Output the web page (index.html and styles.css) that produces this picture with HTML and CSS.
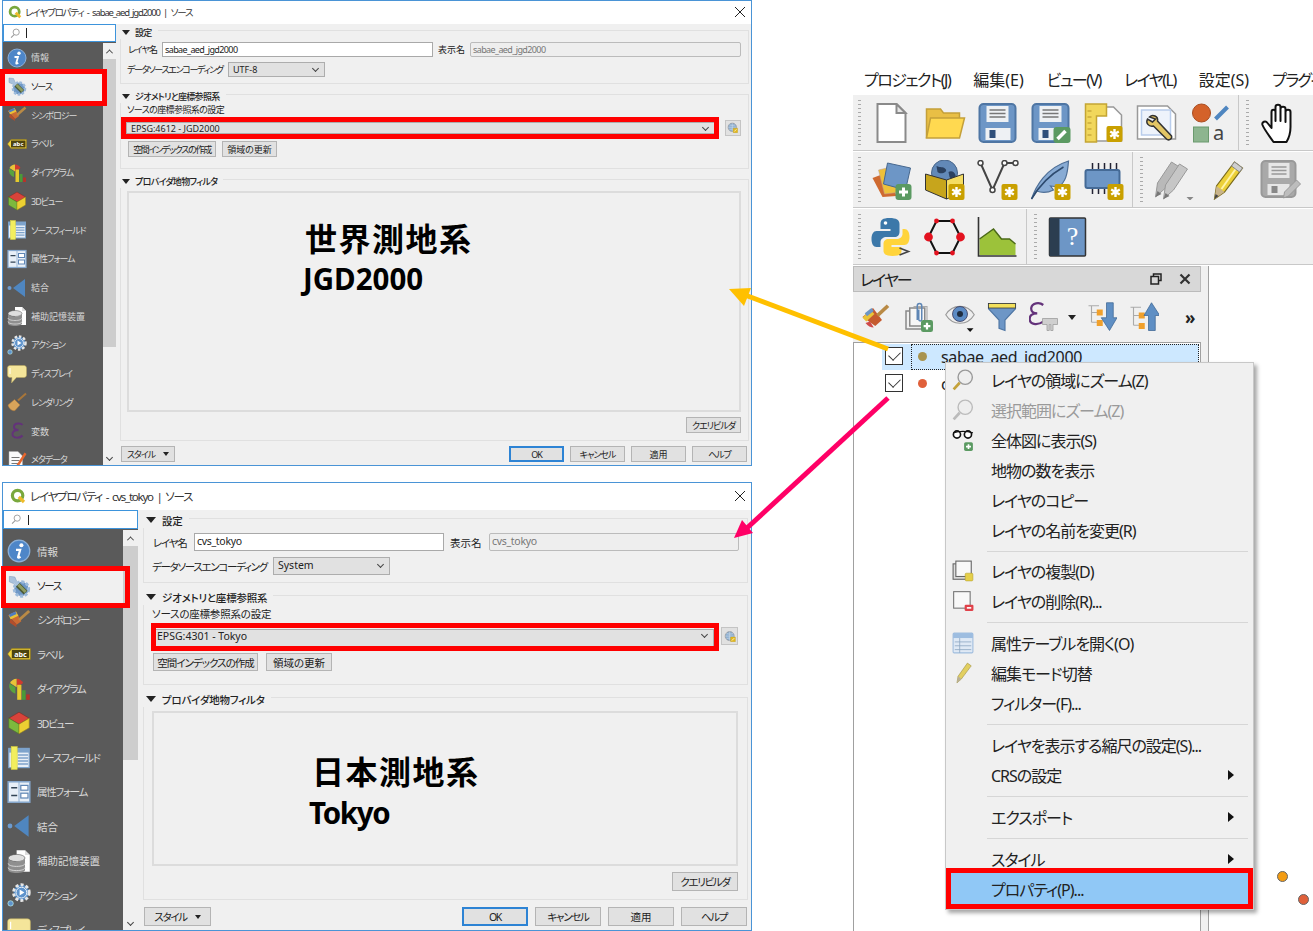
FILE: index.html
```html
<!DOCTYPE html>
<html lang="ja">
<head>
  <meta charset="UTF-8" />
  <title>レイヤプロパティ</title>
  <link rel="stylesheet" href="styles.css">
</head>
<body>
<div class="page">

  <!-- icon sprite -->
  <svg class="sprite" xmlns="http://www.w3.org/2000/svg">
    <defs>
      <g id="b-star"><rect width="16" height="16" rx="2" fill="#c9a000"/><path d="M8 3v10M3.700 5.500l8.600 5M3.700 10.500l8.600-5" stroke="#fff" stroke-width="2.400"/></g>
      <g id="b-plus"><rect width="16" height="16" rx="3" fill="#5b9a62"/><path d="M8 3.500v9M3.500 8h9" stroke="#fff" stroke-width="3"/></g>
      <g id="floppy"><rect x="2" y="1" width="36" height="38" rx="4" fill="#6d96c6" stroke="#4f76a4" stroke-width="2"/><rect x="9" y="3" width="22" height="16" fill="#eef1f4"/><path d="M12 7h16M12 10.500h16M12 14h16" stroke="#777" stroke-width="1.500"/><rect x="8" y="25" width="25" height="12" fill="#eef1f4"/><rect x="12" y="27" width="6" height="8" fill="#2f4f7a"/></g>
    </defs>
    <symbol id="i-info" viewBox="0 0 40 40"><circle cx="20" cy="20" r="18" fill="#4e86c8" stroke="#8cb0d8" stroke-width="2"/><circle cx="24" cy="10.500" r="3.400" fill="#fff"/><path d="M15 18h7l-3.500 12c-.4 1.500 1 1.800 4-.5" stroke="#fff" fill="none" stroke-width="3.600"/></symbol>
    <symbol id="i-source" viewBox="0 0 40 40"><circle cx="24" cy="25" r="12" fill="#6e97c6" stroke="#9dbbdb" stroke-width="5" stroke-dasharray="5 3"/><path d="M4 4l9 1 3 7-5 4-7-3z" fill="#a9c2dc" stroke="#7d9cbc"/><path d="M11 11l12 12" stroke="#a9c2dc" stroke-width="5"/><path d="M18 18l13 13" stroke="#4b5a38" stroke-width="9"/><path d="M19 18l12 12" stroke="#8f9d62" stroke-width="5"/></symbol>
    <symbol id="i-symbol" viewBox="0 0 40 40"><path d="M2 12l13-6 9 16-8 6z" fill="#cc6b33"/><path d="M3 12l12-6 4 7-13 6z" fill="#e9c338"/><path d="M3 11l11-5 2 4-11 5z" fill="#4f7cc0"/><path d="M15 26L6 18l-2 6 12 8z" fill="#b24e2c"/><path d="M20 20L37 5" stroke="#b98a45" stroke-width="5"/></symbol>
    <symbol id="i-diagram" viewBox="0 0 40 40"><path d="M16 3a13 13 0 0 1 11 7l-11 7z" fill="#cf3a30"/><path d="M16 3A13 13 0 0 0 5 10l11 7z" fill="#e9c338"/><path d="M4 11a14 14 0 0 0 10 17V17z" fill="#59a33e"/><rect x="17" y="13" width="7" height="25" fill="#e6c92e"/><rect x="25" y="22" width="6" height="16" fill="#4b9a38"/><rect x="32" y="29" width="6" height="9" fill="#b5332a"/></symbol>
    <symbol id="i-3d" viewBox="0 0 40 40"><path d="M20 2l17 10-17 10L3 12z" fill="#d9433a" stroke="#7a2a25"/><path d="M3 12l17 10v16L3 28z" fill="#7db93d" stroke="#4d7a24"/><path d="M37 12L20 22v16l17-10z" fill="#ecd032" stroke="#9c8a1c"/></symbol>
    <symbol id="i-fields" viewBox="0 0 40 40"><rect x="3" y="4" width="34" height="32" fill="#e8eff7" stroke="#7da3cc" stroke-width="2"/><rect x="3" y="4" width="34" height="7" fill="#7da3cc"/><path d="M18 15h17M18 20h17M18 25h17M18 30h17" stroke="#7da3cc" stroke-width="2.500"/><rect x="7" y="1" width="10" height="38" fill="#f2ee5e" stroke="#d7cf3c"/></symbol>
    <symbol id="i-form" viewBox="0 0 40 40"><rect x="2" y="3" width="36" height="34" fill="#e8eff7" stroke="#87a9cf" stroke-width="2.500"/><path d="M20 3v34" stroke="#87a9cf" stroke-width="1.500"/><rect x="23" y="9" width="12" height="8" fill="#fff" stroke="#5f86b5" stroke-width="2"/><rect x="23" y="22" width="12" height="8" fill="#fff" stroke="#5f86b5" stroke-width="2"/><path d="M7 13h10M7 26h10" stroke="#345" stroke-width="2.500"/></symbol>
    <symbol id="i-join" viewBox="0 0 40 40"><path d="M36 2v36L12 20z" fill="#4f86c0"/><circle cx="5" cy="20" r="4" fill="#6c9bd0"/></symbol>
    <symbol id="i-aux" viewBox="0 0 40 40"><path d="M16 2h14l8 8v28H16z" fill="#fff"/><path d="M30 2v8h8" fill="#ddd"/><ellipse cx="16" cy="15" rx="14" ry="6" fill="#dfdfdf" stroke="#555"/><path d="M2 15v20c0 3 6 5 14 5s14-2 14-5V15c0 3-6 6-14 6S2 18 2 15z" fill="#8f8f8f"/><path d="M2 24c0 3 6 5 14 5s14-2 14-5M2 31c0 3 6 5 14 5s14-2 14-5" stroke="#ddd" stroke-width="1.500" fill="none"/></symbol>
    <symbol id="i-action" viewBox="0 0 40 40"><circle cx="24" cy="16" r="13" fill="#4f86c0" stroke="#e6e6e6" stroke-width="5" stroke-dasharray="5 3.500"/><circle cx="24" cy="16" r="9" fill="#5e93cc" stroke="#fff" stroke-width="1.500"/><path d="M21 11l8 5-8 5z" fill="#fff"/><circle cx="6" cy="34" r="4.500" fill="#5e93cc" stroke="#cfe" stroke-width="1"/></symbol>
    <symbol id="i-display" viewBox="0 0 40 40"><path d="M6 3h28c3 0 5 2 5 5v14c0 3-2 5-5 5H19l-10 11 1-11H6c-3 0-5-2-5-5V8c0-3 2-5 5-5z" fill="#f4e59a" stroke="#b9a75c"/><path d="M6 8v12" stroke="#fff" stroke-width="2"/></symbol>
    <symbol id="i-render" viewBox="0 0 40 40"><path d="M2 26l13-11 11 11-10 11c-5 2-12-3-14-11z" fill="#d9a45a" stroke="#a8763a"/><path d="M22 17L38 3" stroke="#a8763a" stroke-width="4"/></symbol>
    <symbol id="i-var" viewBox="0 0 40 40"><path d="M31 8c-3-4-16-5-17 3-.5 5 4 7 9 7-7 0-13 3-12 9 1 8 15 8 20 2" fill="none" stroke="#63327a" stroke-width="4"/></symbol>
    <symbol id="i-meta" viewBox="0 0 40 40"><path d="M4 3h18l9 9v27H4z" fill="#fafafa" stroke="#aaa"/><path d="M9 15h16M9 21h16M9 27h14" stroke="#777" stroke-width="2"/><path d="M19 30L35 5l4 3-16 25-6 3z" fill="#e8662d"/></symbol>

    <symbol id="t-new" viewBox="0 0 40 40"><path d="M6 1h19l9 9v29H6z" fill="#fff" stroke="#8a8a8a" stroke-width="2"/><path d="M25 1v9h9z" fill="#e6e6e6" stroke="#8a8a8a" stroke-width="2"/></symbol>
    <symbol id="t-open" viewBox="0 0 40 40"><path d="M2 35V6h14l3 4h16v7" fill="#e9bf45" stroke="#c4a03a" stroke-width="1.500"/><path d="M2 35l4-20h34l-5 20z" fill="#ffd950" stroke="#c4a03a" stroke-width="1.500"/></symbol>
    <symbol id="t-save" viewBox="0 0 40 40"><use href="#floppy"/></symbol>
    <symbol id="t-saveas" viewBox="0 0 40 40"><use href="#floppy"/><rect x="23" y="24" width="17" height="16" rx="3" fill="#5b9a62"/><path d="M27 36l8-8" stroke="#fff" stroke-width="3.500"/></symbol>
    <symbol id="t-layout" viewBox="0 0 40 40"><path d="M12 4h18l8 8v26H12z" fill="#fff" stroke="#999" stroke-width="1.500"/><path d="M2 1h21v12H13v26H2z" fill="#f1d75c" stroke="#c4a533" stroke-width="1.500"/><path d="M4 8h4M4 14h4M4 20h4M4 26h4M4 32h4" stroke="#b8952a"/><use href="#b-star" x="23" y="23"/></symbol>
    <symbol id="t-style" viewBox="0 0 40 40"><path d="M1 3h30l8 8v25H1z" fill="#fff" stroke="#999" stroke-width="1.500"/><rect x="5" y="7" width="29" height="25" fill="#eef3fb" stroke="#b9cdec" stroke-width="1.500"/><path d="M13 14c3-3 9-1 8 4l14 15c1 3-3 5-5 3L17 23c-5 1-8-3-6-7l5 3 3-3z" fill="#e3c665" stroke="#333" stroke-width="1.500"/></symbol>
    <symbol id="t-hand" viewBox="0 0 40 40"><path d="M14 39C10 33 5 27 3 22c-1-3 3-5 5-2l4 5V9c0-3 4-3 4 0v9V4c0-3 5-3 5 0v14V6c0-3 5-3 5 0v13V9c0-3 5-3 5 0v15c0 6-1 10-4 15z" fill="#fff" stroke="#111" stroke-width="2" stroke-linejoin="round"/></symbol>

    <symbol id="t-dsm" viewBox="0 0 40 40"><path d="M1 18l16-6 8 24-14 1z" fill="#cf6a30"/><path d="M7 10l17-4 6 26-17 2z" fill="#eec13a" stroke="#b99" stroke-width=".5"/><path d="M16 3l23 5-5 22-22-6z" fill="#6d96c6" stroke="#47688f"/><use href="#b-plus" x="24" y="24"/></symbol>
    <symbol id="t-gpkg" viewBox="0 0 40 40"><circle cx="20" cy="13" r="13" fill="#6289b8" stroke="#49668a"/><path d="M12 6c4 2 6 0 9 3s-5 6-8 3zM24 12c3-2 6 0 7 3s-4 5-6 2z" fill="#2b4160"/><path d="M1 14l21 6v19L1 30z" fill="#c7a51c" stroke="#333"/><path d="M22 20l17-6v18l-17 7z" fill="#f5dd63" stroke="#333"/><use href="#b-star" x="24" y="24"/></symbol>
    <symbol id="t-vec" viewBox="0 0 40 40"><path d="M3 3l12 27L27 3h11" fill="none" stroke="#444" stroke-width="2"/><circle cx="3" cy="3" r="2.500" fill="#fff" stroke="#444" stroke-width="1.500"/><circle cx="15" cy="30" r="2.500" fill="#fff" stroke="#444" stroke-width="1.500"/><circle cx="27" cy="3" r="2.500" fill="#fff" stroke="#444" stroke-width="1.500"/><circle cx="38" cy="3" r="2.500" fill="#fff" stroke="#444" stroke-width="1.500"/><use href="#b-star" x="24" y="24"/></symbol>
    <symbol id="t-feather" viewBox="0 0 40 40"><path d="M1 39C5 27 15 8 38 1c-1 14-3 21-10 26l-8-1 3 4c-6 3-12 3-17 1z" fill="#88abd4" stroke="#4f6f96" stroke-width="1.200"/><path d="M1 39C8 27 19 15 33 7" stroke="#2d4a6e" fill="none" stroke-width="1.500"/><use href="#b-star" x="24" y="24"/></symbol>
    <symbol id="t-chip" viewBox="0 0 40 40"><path d="M9 3v8M15 3v8M21 3v8M27 3v8M33 3v8M9 27v7M15 27v7M21 27v7" stroke="#223" stroke-width="1.500"/><rect x="2" y="10" width="34" height="18" rx="2" fill="#6d96c6" stroke="#456a96" stroke-width="2"/><use href="#b-star" x="24" y="24"/></symbol>
    <symbol id="t-pens" viewBox="0 0 40 40"><path d="M2 37l2-14L18 2l8 5-14 21z" fill="#b9b9b9" stroke="#999"/><path d="M10 39l2-14L26 4l8 5-14 21z" fill="#c6c6c6" stroke="#999"/><path d="M2 37l2-6 4 3z" fill="#777"/><path d="M10 39l2-6 4 3z" fill="#777"/><path d="M33 37h7l-3.500 3.500z" fill="#888"/></symbol>
    <symbol id="t-pen" viewBox="0 0 40 40"><path d="M8 39l2-13L28 2l8 6-18 24z" fill="#ecd038" stroke="#7a6a1c" stroke-width="1.200"/><path d="M15 29L32 5" stroke="#fff3a8" stroke-width="2"/><path d="M28 2l8 6-3 4-8-6z" fill="#cfcfcf" stroke="#888"/><path d="M8 39l2-13 8 6z" fill="#c9b48a"/><path d="M8 39l1-5 3 2z" fill="#444"/></symbol>
    <symbol id="t-savegray" viewBox="0 0 40 40"><rect x="2" y="1" width="34" height="36" rx="4" fill="#a9a9a9" stroke="#999" stroke-width="2"/><rect x="9" y="3" width="21" height="15" fill="#e6e6e6"/><path d="M12 7h15M12 10.500h15M12 14h15" stroke="#999" stroke-width="1.500"/><rect x="8" y="24" width="22" height="11" fill="#e6e6e6"/><rect x="12" y="26" width="6" height="7" fill="#888"/><path d="M24 38l1-6 12-12 4 4-12 12z" fill="#bdbdbd" stroke="#999"/></symbol>

    <symbol id="t-python" viewBox="0 0 40 40"><path d="M18 1c-7 0-9 2-9 6v5h10v2H5c-3 0-5 3-5 8s2 8 5 8h4v-5c0-3 3-5 6-5h8c3 0 5-2 5-5V7c0-4-3-6-10-6z" fill="#3c78a9"/><circle cx="14" cy="6" r="1.800" fill="#fff"/><path d="M31 12v5c0 3-3 5-6 5h-8c-3 0-5 2-5 5v7c0 3 3 5 9 5 7 0 9-2 9-5v-4H20v-2h13c3 0 5-3 5-8s-2-8-5-8z" fill="#ffd43b"/><path d="M28 31l9 3.500-9 3.500" fill="none" stroke="#444" stroke-width="1.600"/></symbol>
    <symbol id="t-hexagon" viewBox="0 0 40 40"><path d="M12 4h16l8 16-8 16H12L4 20z" fill="none" stroke="#111" stroke-width="2"/><g fill="#e3121f"><circle cx="12" cy="4" r="2.400"/><circle cx="28" cy="4" r="2.400"/><circle cx="12" cy="36" r="2.400"/><circle cx="28" cy="36" r="2.400"/><circle cx="4" cy="20" r="4.400"/><circle cx="36" cy="20" r="4.400"/></g></symbol>
    <symbol id="t-profile" viewBox="0 0 40 40"><path d="M2 38V22l14-10 8 10 8 0 6 5v11z" fill="#9cc23a"/><path d="M2 22l14-10 8 10 8 0 6 5" fill="none" stroke="#4b6a18" stroke-width="1.500"/><path d="M1 0v39h38" fill="none" stroke="#333" stroke-width="1.600"/></symbol>

    <symbol id="l-brush" viewBox="0 0 40 40"><path d="M2 20l14-12 12 16-9 8z" fill="#c55a2e"/><path d="M2 21l10-11 6 6-11 10z" fill="#e9c338"/><path d="M5 15l9-7 3 4-9 7z" fill="#6d96c6"/><path d="M6 28l6-2 5 8c-4 0-8-2-11-6z" fill="#cf4a4a"/><path d="M22 18L36 5" stroke="#b98a45" stroke-width="5"/></symbol>
    <symbol id="l-clip" viewBox="0 0 40 40"><path d="M14 12H4v24h20" fill="none" stroke="#888" stroke-width="2"/><rect x="9" y="8" width="20" height="24" fill="#f6f6f6" stroke="#888" stroke-width="2"/><path d="M14 6h18v24" fill="none" stroke="#aaa" stroke-width="1.500"/><path d="M19 24V5c0-4 6-4 6 0v18c0 3-4 3-4 0V10" fill="none" stroke="#5e86b5" stroke-width="2"/><use href="#b-plus" x="24" y="24"/></symbol>
    <symbol id="l-eye" viewBox="0 0 40 40"><path d="M1 17C10 2 30 2 39 17 30 32 10 32 1 17z" fill="#eee" stroke="#999" stroke-width="1.500"/><circle cx="20" cy="16" r="10" fill="#5c8bc4" stroke="#335"/><circle cx="20" cy="16" r="4" fill="#1f2d40"/><path d="M29 35h9l-4.500 5z" fill="#111"/></symbol>
    <symbol id="l-funnel" viewBox="0 0 40 40"><path d="M2 2h36v7L24 24v14l-8-3V24L2 9z" fill="#6d96c6" stroke="#4f76a4" stroke-width="1.500"/><rect x="2" y="2" width="36" height="6" fill="#f3e05c" stroke="#333"/></symbol>
    <symbol id="l-expr" viewBox="0 0 40 40"><path d="M19 4C14 0 4 1 3 8c-.5 5 3 7 8 7-6 0-11 3-10 9 1 7 12 7 18 2" fill="none" stroke="#63327a" stroke-width="3"/><path d="M18 22h20v8h-6v8h-3v-8h-2v8h-3v-8h-6z" fill="#cfcfcf" stroke="#999"/></symbol>
    <symbol id="l-expand" viewBox="0 0 40 40"><path d="M2 5h14M6 5v22M6 14h10M6 27h10" stroke="#aaa" fill="none" stroke-width="1.500"/><rect x="13" y="10" width="8" height="8" fill="#f0a02c"/><rect x="13" y="24" width="8" height="8" fill="#f0a02c"/><path d="M26 1h9v20h5L30 38 19 21h7z" fill="#5f8fc4" stroke="#3e6693"/></symbol>
    <symbol id="l-collapse" viewBox="0 0 40 40"><path d="M2 7h14M6 7v24M6 18h10M6 31h10" stroke="#aaa" fill="none" stroke-width="1.500"/><rect x="13" y="14" width="8" height="8" fill="#f0a02c"/><rect x="13" y="28" width="8" height="8" fill="#f0a02c"/><path d="M30 1l11 17h-6v20h-9V18h-6z" fill="#5f8fc4" stroke="#3e6693"/></symbol>

    <symbol id="m-zoom" viewBox="0 0 40 40"><circle cx="24" cy="15" r="13" fill="#eee" stroke="#999" stroke-width="2.500"/><path d="M14 25L3 37" stroke="#c4a23a" stroke-width="5"/></symbol>
    <symbol id="m-zoomoff" viewBox="0 0 40 40"><circle cx="24" cy="15" r="13" fill="#eee" stroke="#bbb" stroke-width="2.500"/><path d="M14 25L3 37" stroke="#bbb" stroke-width="5"/></symbol>
    <symbol id="m-glasses" viewBox="0 0 40 40"><circle cx="9" cy="10" r="6.500" fill="#fff" stroke="#111" stroke-width="3"/><circle cx="29" cy="10" r="6.500" fill="#fff" stroke="#111" stroke-width="3"/><path d="M2 7c10-3 26-3 36 0" fill="none" stroke="#111" stroke-width="2.500"/><use href="#b-plus" x="22" y="24"/></symbol>
    <symbol id="m-dup" viewBox="0 0 40 40"><rect x="2" y="7" width="26" height="28" fill="#ddd" stroke="#666" stroke-width="2"/><rect x="7" y="2" width="28" height="28" fill="#f8f8f8" stroke="#666" stroke-width="2"/><rect x="24" y="24" width="14" height="14" rx="2" fill="#e5cf4a" stroke="#b39d24"/></symbol>
    <symbol id="m-del" viewBox="0 0 40 40"><rect x="3" y="3" width="30" height="30" fill="#f8f8f8" stroke="#777" stroke-width="2"/><rect x="23" y="27" width="16" height="11" rx="2" fill="#e0424a"/><path d="M27 32.500h8" stroke="#fff" stroke-width="3"/></symbol>
    <symbol id="m-table" viewBox="0 0 40 40"><rect x="2" y="2" width="36" height="36" rx="2" fill="#dfe9f5" stroke="#a0bddd" stroke-width="2"/><rect x="2" y="2" width="36" height="9" fill="#9dbde0"/><path d="M14 11v27M5 18h30M5 25h30M5 32h30" stroke="#8fa8c4" stroke-width="1.500"/></symbol>
    <symbol id="m-pen" viewBox="0 0 40 40"><path d="M9 38l2-12L28 2l7 5-18 24z" fill="#e2cf60" stroke="#998a3c"/><path d="M9 38l2-12 6 5z" fill="#b8b098"/></symbol>
    <symbol id="s-globe" viewBox="0 0 40 40"><circle cx="19" cy="19" r="15" fill="#8fb0d2" stroke="#8a8a8a" stroke-width="2"/><path d="M4 19h30M19 4v30M8 10c6 3 16 3 22 0M8 28c6-3 16-3 22 0" fill="none" stroke="#dfe8f0" stroke-width="1.500"/><rect x="22" y="22" width="16" height="16" rx="1" fill="#e3b91e" stroke="#a98a14"/><path d="M26 34l8-8" stroke="#fff" stroke-width="2.500"/></symbol>
    <symbol id="q-logo" viewBox="0 0 40 40"><circle cx="19" cy="19" r="13" fill="none" stroke="#79a83d" stroke-width="8"/><path d="M22 22l13 13" stroke="#eebb2a" stroke-width="8"/></symbol>
  </svg>

  <!-- 世界測地系 dialog -->
  <div class="dialog dlg-a">
    <div class="titlebar">
      <svg class="title-logo"><use href="#q-logo"/></svg>
      <span class="title-text">レイヤプロパティ - sabae_aed_jgd2000 | ソース</span>
      <span class="title-close"></span>
    </div>
    <div class="dialog-body">
      <aside class="side">
        <div class="search"><svg class="search-icon" viewBox="0 0 16 16"><circle cx="9" cy="6" r="4.500" fill="none" stroke="#999" stroke-width="1.300"/><path d="M6 9.500L1.500 14" stroke="#999" stroke-width="1.500"/></svg><span class="caret"></span></div>
        <div class="side-list">
          <ul class="nav">
            <li class="nav-item kj"><svg class="nav-icon"><use href="#i-info"/></svg>情報</li>
            <li class="nav-item active"><svg class="nav-icon"><use href="#i-source"/></svg>ソース</li>
            <li class="nav-item"><svg class="nav-icon"><use href="#i-symbol"/></svg>シンボロジー</li>
            <li class="nav-item"><svg class="nav-icon" viewBox="0 0 40 40"><path d="M1 20l7-9h31v18H8z" fill="#f3d33c" stroke="#8a7414"/><rect x="8" y="13" width="29" height="14" fill="#4d4410"/><text x="22.500" y="24.500" class="svg-abc">abc</text></svg>ラベル</li>
            <li class="nav-item"><svg class="nav-icon"><use href="#i-diagram"/></svg>ダイアグラム</li>
            <li class="nav-item"><svg class="nav-icon"><use href="#i-3d"/></svg>3Dビュー</li>
            <li class="nav-item"><svg class="nav-icon"><use href="#i-fields"/></svg>ソースフィールド</li>
            <li class="nav-item"><svg class="nav-icon"><use href="#i-form"/></svg>属性フォーム</li>
            <li class="nav-item kj"><svg class="nav-icon"><use href="#i-join"/></svg>結合</li>
            <li class="nav-item kj"><svg class="nav-icon"><use href="#i-aux"/></svg>補助記憶装置</li>
            <li class="nav-item"><svg class="nav-icon"><use href="#i-action"/></svg>アクション</li>
            <li class="nav-item"><svg class="nav-icon"><use href="#i-display"/></svg>ディスプレイ</li>
            <li class="nav-item"><svg class="nav-icon"><use href="#i-render"/></svg>レンダリング</li>
            <li class="nav-item kj"><svg class="nav-icon"><use href="#i-var"/></svg>変数</li>
            <li class="nav-item"><svg class="nav-icon"><use href="#i-meta"/></svg>メタデータ</li>
          </ul>
          <div class="scroll">
            <span class="scroll-btn"><i class="chev up"></i></span>
            <span class="scroll-thumb"></span>
            <span class="scroll-btn end"><i class="chev"></i></span>
          </div>
        </div>
      </aside>
      <main class="main">
        <section class="group group-1">
          <h3 class="group-title"><i class="tri"></i>設定</h3>
          <div class="row row-name">
            <label class="name-label">レイヤ名</label>
            <span class="input">sabae_aed_jgd2000</span>
            <label class="show-label kj">表示名</label>
            <span class="input off">sabae_aed_jgd2000</span>
          </div>
          <div class="row row-enc">
            <label class="enc-label">データソースエンコーディング</label>
            <span class="combo enc-combo">UTF-8<i class="chev"></i></span>
          </div>
        </section>
        <section class="group group-2">
          <h3 class="group-title"><i class="tri"></i>ジオメトリと座標参照系</h3>
          <p class="crs-label">ソースの座標参照系の設定</p>
          <div class="row row-crs">
            <span class="combo crs-combo">EPSG:4612 - JGD2000<i class="chev"></i></span>
            <span class="crs-btn"><svg><use href="#s-globe"/></svg></span>
          </div>
          <div class="row row-btns">
            <span class="btn idx-btn">空間インデックスの作成</span>
            <span class="btn ext-btn kj">領域の更新</span>
          </div>
        </section>
        <section class="group group-3">
          <h3 class="group-title"><i class="tri"></i>プロバイダ地物フィルタ</h3>
          <div class="filter-box"></div>
          <div class="row row-query"><span class="btn query-btn">クエリビルダ</span></div>
        </section>
        <footer class="foot">
          <span class="btn style-btn">スタイル<i class="tri small"></i></span>
          <span class="foot-right">
            <span class="btn foot-btn default">OK</span>
            <span class="btn foot-btn">キャンセル</span>
            <span class="btn foot-btn kj">適用</span>
            <span class="btn foot-btn">ヘルプ</span>
          </span>
        </footer>
      </main>
    </div>
  </div>

  <!-- 日本測地系 dialog -->
  <div class="dialog dlg-b">
    <div class="titlebar">
      <svg class="title-logo"><use href="#q-logo"/></svg>
      <span class="title-text">レイヤプロパティ - cvs_tokyo | ソース</span>
      <span class="title-close"></span>
    </div>
    <div class="dialog-body">
      <aside class="side">
        <div class="search"><svg class="search-icon" viewBox="0 0 16 16"><circle cx="9" cy="6" r="4.500" fill="none" stroke="#999" stroke-width="1.300"/><path d="M6 9.500L1.500 14" stroke="#999" stroke-width="1.500"/></svg><span class="caret"></span></div>
        <div class="side-list">
          <ul class="nav">
            <li class="nav-item kj"><svg class="nav-icon"><use href="#i-info"/></svg>情報</li>
            <li class="nav-item active"><svg class="nav-icon"><use href="#i-source"/></svg>ソース</li>
            <li class="nav-item"><svg class="nav-icon"><use href="#i-symbol"/></svg>シンボロジー</li>
            <li class="nav-item"><svg class="nav-icon" viewBox="0 0 40 40"><path d="M1 20l7-9h31v18H8z" fill="#f3d33c" stroke="#8a7414"/><rect x="8" y="13" width="29" height="14" fill="#4d4410"/><text x="22.500" y="24.500" class="svg-abc">abc</text></svg>ラベル</li>
            <li class="nav-item"><svg class="nav-icon"><use href="#i-diagram"/></svg>ダイアグラム</li>
            <li class="nav-item"><svg class="nav-icon"><use href="#i-3d"/></svg>3Dビュー</li>
            <li class="nav-item"><svg class="nav-icon"><use href="#i-fields"/></svg>ソースフィールド</li>
            <li class="nav-item"><svg class="nav-icon"><use href="#i-form"/></svg>属性フォーム</li>
            <li class="nav-item kj"><svg class="nav-icon"><use href="#i-join"/></svg>結合</li>
            <li class="nav-item kj"><svg class="nav-icon"><use href="#i-aux"/></svg>補助記憶装置</li>
            <li class="nav-item"><svg class="nav-icon"><use href="#i-action"/></svg>アクション</li>
            <li class="nav-item"><svg class="nav-icon"><use href="#i-display"/></svg>ディスプレイ</li>
          </ul>
          <div class="scroll">
            <span class="scroll-btn"><i class="chev up"></i></span>
            <span class="scroll-thumb"></span>
            <span class="scroll-btn end"><i class="chev"></i></span>
          </div>
        </div>
      </aside>
      <main class="main">
        <section class="group group-1">
          <h3 class="group-title"><i class="tri"></i>設定</h3>
          <div class="row row-name">
            <label class="name-label">レイヤ名</label>
            <span class="input">cvs_tokyo</span>
            <label class="show-label kj">表示名</label>
            <span class="input off">cvs_tokyo</span>
          </div>
          <div class="row row-enc">
            <label class="enc-label">データソースエンコーディング</label>
            <span class="combo enc-combo">System<i class="chev"></i></span>
          </div>
        </section>
        <section class="group group-2">
          <h3 class="group-title"><i class="tri"></i>ジオメトリと座標参照系</h3>
          <p class="crs-label">ソースの座標参照系の設定</p>
          <div class="row row-crs">
            <span class="combo crs-combo">EPSG:4301 - Tokyo<i class="chev"></i></span>
            <span class="crs-btn"><svg><use href="#s-globe"/></svg></span>
          </div>
          <div class="row row-btns">
            <span class="btn idx-btn">空間インデックスの作成</span>
            <span class="btn ext-btn kj">領域の更新</span>
          </div>
        </section>
        <section class="group group-3">
          <h3 class="group-title"><i class="tri"></i>プロバイダ地物フィルタ</h3>
          <div class="filter-box"></div>
          <div class="row row-query"><span class="btn query-btn">クエリビルダ</span></div>
        </section>
        <footer class="foot">
          <span class="btn style-btn">スタイル<i class="tri small"></i></span>
          <span class="foot-right">
            <span class="btn foot-btn default">OK</span>
            <span class="btn foot-btn">キャンセル</span>
            <span class="btn foot-btn kj">適用</span>
            <span class="btn foot-btn">ヘルプ</span>
          </span>
        </footer>
      </main>
    </div>
  </div>

  <!-- QGIS main window, cut off by the slide -->
  <div class="qgis">
    <nav class="menubar">
      <span>プロジェクト(J)</span><span class="kj">編集(E)</span><span>ビュー(V)</span><span>レイヤ(L)</span><span class="kj">設定(S)</span><span>プラグイン(P)</span>
    </nav>
    <div class="tool-row">
      <div class="tool-bar">
        <svg class="tool"><use href="#t-new"/></svg>
        <svg class="tool"><use href="#t-open"/></svg>
        <svg class="tool"><use href="#t-save"/></svg>
        <svg class="tool"><use href="#t-saveas"/></svg>
        <svg class="tool"><use href="#t-layout"/></svg>
        <svg class="tool"><use href="#t-style"/></svg>
        <svg class="tool" viewBox="0 0 40 40"><circle cx="12" cy="10" r="9" fill="#d4622a" stroke="#a94c20"/><path d="M26 16L38 4" stroke="#4f86c0" stroke-width="4"/><rect x="4" y="24" width="15" height="15" fill="#8db58f" stroke="#6b9a6e"/><text x="29" y="37" class="svg-a">a</text></svg>
      </div>
      <div class="tool-bar last">
        <svg class="tool"><use href="#t-hand"/></svg>
      </div>
    </div>
    <div class="tool-row">
      <div class="tool-bar">
        <svg class="tool"><use href="#t-dsm"/></svg>
        <svg class="tool"><use href="#t-gpkg"/></svg>
        <svg class="tool"><use href="#t-vec"/></svg>
        <svg class="tool"><use href="#t-feather"/></svg>
        <svg class="tool"><use href="#t-chip"/></svg>
      </div>
      <div class="tool-bar last">
        <svg class="tool"><use href="#t-pens"/></svg>
        <svg class="tool"><use href="#t-pen"/></svg>
        <svg class="tool"><use href="#t-savegray"/></svg>
      </div>
    </div>
    <div class="tool-row">
      <div class="tool-bar">
        <svg class="tool"><use href="#t-python"/></svg>
        <svg class="tool"><use href="#t-hexagon"/></svg>
        <svg class="tool"><use href="#t-profile"/></svg>
      </div>
      <div class="tool-bar last">
        <svg class="tool" viewBox="0 0 40 40"><rect x="2" y="1" width="36" height="38" rx="1" fill="#6d96c6" stroke="#333" stroke-width="1.500"/><rect x="2" y="1" width="10" height="38" fill="#2c3e50"/><text x="25" y="28" class="svg-help">?</text></svg>
      </div>
    </div>
    <div class="workspace">
      <div class="dock">
        <div class="dock-title">
          <span>レイヤー</span>
          <svg class="dock-float" viewBox="0 0 12 12"><path d="M3.500 3V1h7.500v6.500H8.500M1 3.500h7.500V11H1z" fill="none" stroke="#222" stroke-width="1.500"/></svg>
          <svg class="dock-close" viewBox="0 0 12 12"><path d="M1.500 1.500l9 9M10.500 1.500l-9 9" stroke="#333" stroke-width="2.200"/></svg>
        </div>
        <div class="dock-tools">
          <svg class="ltool"><use href="#l-brush"/></svg>
          <svg class="ltool"><use href="#l-clip"/></svg>
          <svg class="ltool"><use href="#l-eye"/></svg>
          <svg class="ltool"><use href="#l-funnel"/></svg>
          <svg class="ltool"><use href="#l-expr"/></svg>
          <i class="tri"></i>
          <svg class="ltool"><use href="#l-expand"/></svg>
          <svg class="ltool"><use href="#l-collapse"/></svg>
          <span class="more">»</span>
        </div>
        <div class="tree">
          <div class="tree-row selected">
            <span class="check"></span><i class="dot dot-a"></i><span class="tree-name">sabae_aed_jgd2000</span>
          </div>
          <div class="tree-row">
            <span class="check"></span><i class="dot dot-b"></i><span class="tree-name">cvs_tokyo</span>
          </div>
        </div>
      </div>
      <div class="dock-edge"></div>
      <div class="canvas"></div>
    </div>

    <ul class="ctx">
      <li class="ctx-item"><svg class="ctx-icon"><use href="#m-zoom"/></svg>レイヤの領域にズーム(Z)</li>
      <li class="ctx-item off"><svg class="ctx-icon"><use href="#m-zoomoff"/></svg>選択範囲にズーム(Z)</li>
      <li class="ctx-item"><svg class="ctx-icon"><use href="#m-glasses"/></svg>全体図に表示(S)</li>
      <li class="ctx-item">地物の数を表示</li>
      <li class="ctx-item">レイヤのコピー</li>
      <li class="ctx-item">レイヤの名前を変更(R)</li>
      <li class="ctx-sep tight"></li>
      <li class="ctx-item"><svg class="ctx-icon"><use href="#m-dup"/></svg>レイヤの複製(D)</li>
      <li class="ctx-item"><svg class="ctx-icon"><use href="#m-del"/></svg>レイヤの削除(R)...</li>
      <li class="ctx-sep"></li>
      <li class="ctx-item"><svg class="ctx-icon"><use href="#m-table"/></svg>属性テーブルを開く(O)</li>
      <li class="ctx-item"><svg class="ctx-icon"><use href="#m-pen"/></svg>編集モード切替</li>
      <li class="ctx-item">フィルター(F)...</li>
      <li class="ctx-sep"></li>
      <li class="ctx-item">レイヤを表示する縮尺の設定(S)...</li>
      <li class="ctx-item sub">CRSの設定</li>
      <li class="ctx-sep"></li>
      <li class="ctx-item sub">エクスポート</li>
      <li class="ctx-sep"></li>
      <li class="ctx-item sub">スタイル</li>
      <li class="ctx-item hot">プロパティ(P)...</li>
    </ul>

    <i class="pin pin-a"></i>
    <i class="pin pin-b"></i>
  </div>

  <!-- slide annotations -->
  <div class="mark mark-a-nav"></div>
  <div class="mark mark-a-crs"></div>
  <div class="mark mark-b-nav"></div>
  <div class="mark mark-b-crs"></div>
  <div class="mark mark-prop"></div>

  <div class="note note-a"><b class="note-jp">世界測地系</b><b class="note-en">JGD2000</b></div>
  <div class="note note-b"><b class="note-jp">日本測地系</b><b class="note-en">Tokyo</b></div>

  <svg class="arrows" viewBox="0 0 1313 931">
    <path d="M888 349L745 295" stroke="#ffc000" stroke-width="5"/>
    <path d="M729 289L751 288L744 306z" fill="#ffc000"/>
    <path d="M888 398L747 528" stroke="#ff0066" stroke-width="5"/>
    <path d="M734 538L742 520L753 533z" fill="#ff0066"/>
  </svg>
</div>
</body>
</html>
```

FILE: styles.css
```css
* {
  box-sizing: border-box;
}

body {
  margin: 0;
  background: #fff;
}

.page {
  position: relative;
  width: 1313px;
  height: 931px;
  overflow: hidden;
  background: #fff;
  color: #222;
  font-family: "Noto Sans", "Noto Sans CJK JP", sans-serif;
  font-feature-settings: "palt";
}

.sprite {
  position: absolute;
  width: 0;
  height: 0;
}

.svg-abc {
  font: bold 12px "Noto Sans", sans-serif;
  letter-spacing: 0;
  fill: #fff;
  text-anchor: middle;
}

.svg-a {
  font: 20px "Noto Sans", sans-serif;
  fill: #444;
  text-anchor: middle;
}

.svg-help {
  font: 26px "Liberation Serif", serif;
  fill: #fff;
  text-anchor: middle;
}

/* kanji only labels are not squeezed like kana */
.dialog .kj,
.menubar .kj {
  letter-spacing: 0;
}

/* dialogs */
.dialog {
  position: absolute;
  left: 2px;
  width: 750px;
  display: flex;
  flex-direction: column;
  border: 1px solid #4a94d6;
  background: #f0f0f0;
  font-size: var(--fs);
  letter-spacing: var(--ls);
  overflow: hidden;
}

.dlg-a {
  top: 0;
  height: 466px;
  --fs: 9px;
  --ls: -1px;
  --title-h: 23px;
  --title-fs: 9.5px;
  --title-ls: -1.15px;
  --logo: 14px;
  --side-w: 113px;
  --scroll-w: 13px;
  --search-h: 18px;
  --nav-h: 28.72px;
  --nav-top: 1.4px;
  --nav-icon: 20px;
  --nav-pad: 4px;
  --nav-gap: 4px;
  --thumb: 288px;
  --row-h: 15px;
  --tri: 9px;
}

.dlg-b {
  top: 482px;
  height: 449px;
  --fs: 10.5px;
  --ls: -1.3px;
  --title-h: 27px;
  --title-fs: 11.5px;
  --title-ls: -1.25px;
  --logo: 16px;
  --side-w: 135px;
  --scroll-w: 15px;
  --search-h: 19px;
  --nav-h: 34.4px;
  --nav-top: 5px;
  --nav-icon: 24px;
  --nav-pad: 4px;
  --nav-gap: 6px;
  --thumb: 214px;
  --row-h: 18px;
  --tri: 11px;
}

.titlebar {
  flex: none;
  height: var(--title-h);
  display: flex;
  align-items: center;
  gap: 3px;
  padding: 0 6px 2px 5px;
  background: #fff;
  font-size: var(--title-fs);
  letter-spacing: var(--title-ls);
  word-spacing: 2px;
  color: #333;
}

.dlg-b .titlebar {
  padding-left: 7px;
  gap: 4px;
}

.title-logo {
  flex: none;
  width: var(--logo);
  height: var(--logo);
}

.title-text {
  flex: 1;
}

/* close button, two thin strokes */
.title-close {
  width: 10px;
  height: 10px;
  background:
    linear-gradient(45deg, transparent 46%, #222 46%, #222 54%, transparent 54%),
    linear-gradient(-45deg, transparent 46%, #222 46%, #222 54%, transparent 54%);
}

.dialog-body {
  flex: 1;
  min-height: 0;
  display: flex;
}

.side {
  flex: none;
  width: var(--side-w);
  display: flex;
  flex-direction: column;
}

.search {
  flex: none;
  height: var(--search-h);
  display: flex;
  align-items: center;
  gap: 5px;
  padding-left: 6px;
  background: #fff;
  border: 1px solid #3d94dc;
}

.dlg-b .search {
  padding-left: 7px;
  gap: 6px;
}

.search-icon {
  width: 11px;
  height: 11px;
}

.caret {
  width: 1px;
  height: 10px;
  background: #222;
}

.side-list {
  flex: 1;
  min-height: 0;
  display: flex;
  background: #5a5a5a;
}

.nav {
  flex: 1;
  min-width: 0;
  margin: 0;
  padding: var(--nav-top) 0 0;
  list-style: none;
  overflow: hidden;
}

.nav-item {
  height: var(--nav-h);
  display: flex;
  align-items: center;
  gap: var(--nav-gap);
  padding-left: var(--nav-pad);
  color: #d8d8d8;
  white-space: nowrap;
}

.nav-item.active {
  background: #f0f0f0;
  color: #222;
}

.nav-icon {
  flex: none;
  width: var(--nav-icon);
  height: var(--nav-icon);
}

.scroll {
  flex: none;
  width: var(--scroll-w);
  margin-top: 1px;
  display: flex;
  flex-direction: column;
  background: #f0f0f0;
}

.scroll-btn {
  flex: none;
  height: 16px;
  display: flex;
  align-items: center;
  justify-content: center;
}

.scroll-btn.end {
  margin-top: auto;
}

.scroll-thumb {
  flex: none;
  height: var(--thumb);
  background: #cdcdcd;
}

.chev {
  display: block;
  flex: none;
  width: 5px;
  height: 5px;
  border-right: 1px solid #444;
  border-bottom: 1px solid #444;
  transform: rotate(45deg);
}

.chev.up {
  transform: rotate(225deg) translate(-1px, -1px);
}

.main {
  flex: 1;
  min-width: 0;
  display: flex;
  flex-direction: column;
  background: #f0f0f0;
}

.dlg-a .main {
  padding: 6px 2px 0 4px;
  gap: 10px;
}

.dlg-b .main {
  padding: 8px 3px 0 5px;
  gap: 12px;
}

.group {
  flex: none;
  border: 1px solid #e0e0e0;
}

.group-title {
  display: flex;
  align-items: center;
  gap: 5px;
  width: fit-content;
  margin: 0;
  padding: 0 6px 0 2px;
  background: #f0f0f0;
  font-size: var(--fs);
  font-weight: 500;
  color: #222;
}

.dlg-a .group-title {
  height: 14px;
  margin: -6px 0 0 -1px;
  letter-spacing: -0.7px;
}

.dlg-b .group-title {
  height: 16px;
  margin: -7px 0 0 -1px;
  gap: 6px;
  padding-left: 3px;
  letter-spacing: -0.2px;
}

.tri {
  display: block;
  flex: none;
  width: 0;
  height: 0;
  border-style: solid;
  border-width: calc(var(--tri) * 0.6) calc(var(--tri) / 2) 0;
  border-color: #222 transparent transparent;
}

.tri.small {
  --tri: 7px;
}

.row {
  display: flex;
  align-items: center;
}

.row label {
  flex: none;
  white-space: nowrap;
}

.input,
.combo {
  height: var(--row-h);
  display: flex;
  align-items: center;
  white-space: nowrap;
}

.input {
  flex: 1 1 0;
  min-width: 0;
  padding-left: 2px;
  background: #fff;
  border: 1px solid #a9a9a9;
}

.input.off {
  background: #eeeeee;
  border-color: #bbb;
  border-radius: 2px;
  color: #777;
}

.combo {
  justify-content: space-between;
  padding: 0 6px 0 4px;
  background: #e1e1e1;
  border: 1px solid #adadad;
  letter-spacing: 0;
}

.combo .chev {
  margin-top: -2px;
}

.btn {
  flex: none;
  display: flex;
  align-items: center;
  justify-content: center;
  background: #e1e1e1;
  border: 1px solid #b4b4b4;
  white-space: nowrap;
  color: #222;
}

.crs-btn {
  flex: none;
  display: flex;
  align-items: center;
  justify-content: center;
  background: #e1e1e1;
  border: 1px solid #c4c4c4;
}

.crs-btn svg {
  width: 80%;
  height: 80%;
}

.crs-label {
  margin: 0;
  white-space: nowrap;
}

.filter-box {
  border: 2px solid #dcdcdc;
  background: #f0f0f0;
}

.row-query {
  justify-content: flex-end;
}

.foot {
  flex: none;
  display: flex;
  align-items: center;
  justify-content: space-between;
}

.foot-right {
  display: flex;
}

.style-btn {
  gap: 8px;
}

.foot-btn.default {
  border: 2px solid #2d83d4;
}

/* dialog A metrics */
.dlg-a .group-1 { height: 54px; }
.dlg-a .group-2 { height: 75px; }
.dlg-a .group-3 { height: 262px; }
.dlg-a .input { letter-spacing: -0.6px; }
.dlg-a .row-name { margin: 3px 7px 0; gap: 5px; }
.dlg-a .name-label { width: 29px; }
.dlg-a .show-label { width: 27px; }
.dlg-a .row-enc { margin: 5px 6px 0; gap: 5px; }
.dlg-a .enc-label { width: 96px; letter-spacing: -1.3px; }
.dlg-a .enc-combo { width: 97px; }
.dlg-a .crs-label { margin: 0 6px; height: 14px; line-height: 14px; letter-spacing: -0.6px; }
.dlg-a .row-crs { margin: 3px 7px 0 5px; gap: 10px; height: 16px; }
.dlg-a .crs-combo { flex: 1; height: 12px; }
.dlg-a .crs-btn { width: 16px; height: 16px; }
.dlg-a .row-btns { margin: 5px 7px 0; gap: 6px; }
.dlg-a .idx-btn { width: 88px; height: 16px; letter-spacing: -1.3px; }
.dlg-a .ext-btn { width: 55px; height: 16px; }
.dlg-a .filter-box { margin: 3px 7px 0 6px; height: 221px; }
.dlg-a .row-query { margin: 5px 7px 0; }
.dlg-a .query-btn { width: 55px; height: 16px; }
.dlg-a .foot { margin-top: -5px; padding: 0 2px 0 1px; }
.dlg-a .foot-right { gap: 6px; }
.dlg-a .style-btn { width: 54px; height: 16px; }
.dlg-a .foot-btn { width: 55px; height: 16px; }

/* dialog B metrics */
.dlg-b .group-1 { height: 65px; }
.dlg-b .group-2 { height: 90px; }
.dlg-b .group-3 { height: 203px; }
.dlg-b .input { letter-spacing: -0.3px; padding-bottom: 2px; }
.dlg-b .combo { padding-bottom: 2px; }
.dlg-b .row-name { margin: 5px 8px 0 9px; gap: 6px; }
.dlg-b .name-label { width: 35px; }
.dlg-b .show-label { width: 33px; }
.dlg-b .row-enc { margin: 6px 8px 0; gap: 6px; }
.dlg-b .enc-label { width: 115px; }
.dlg-b .enc-combo { width: 117px; }
.dlg-b .crs-label { margin: 1px 8px 0; height: 16px; line-height: 16px; letter-spacing: -0.2px; }
.dlg-b .row-crs { margin: 4px 9px 0 8px; gap: 7px; height: 20px; }
.dlg-b .crs-combo { flex: 1; height: 18px; margin-top: 3px; padding-bottom: 4px; }
.dlg-b .crs-btn { width: 17px; height: 18px; }
.dlg-b .row-btns { margin: 7px 8px 0 9px; gap: 8px; }
.dlg-b .idx-btn { width: 105px; height: 18px; letter-spacing: -1px; }
.dlg-b .ext-btn { width: 66px; height: 18px; }
.dlg-b .filter-box { margin: 4px 9px 0 8px; height: 155px; }
.dlg-b .row-query { margin: 6px 9px 0; }
.dlg-b .query-btn { width: 66px; height: 19px; }
.dlg-b .foot { margin-top: -5px; padding: 0 1px; }
.dlg-b .foot-right { gap: 7px; }
.dlg-b .style-btn { width: 67px; height: 19px; }
.dlg-b .foot-btn { width: 66px; height: 19px; }

/* QGIS window */
.qgis {
  position: absolute;
  left: 853px;
  top: 70px;
  width: 460px;
  height: 861px;
  display: flex;
  flex-direction: column;
  font-size: 16px;
}

.menubar {
  flex: none;
  height: 24px;
  display: flex;
  align-items: center;
  gap: 23px;
  padding: 0 0 6px 11px;
  white-space: nowrap;
  letter-spacing: -1.5px;
  color: #222;
}

.tool-row {
  flex: none;
  height: 57px;
  display: flex;
  background: #f0f0f0;
  border-top: 1px solid #fff;
  border-bottom: 1px solid #c8c8c8;
}

.tool-bar {
  display: flex;
  align-items: center;
  padding-right: 2px;
  border-right: 1px solid #c8c8c8;
}

.tool-bar.last {
  border-right: 0;
  padding-left: 2px;
}

/* grip dots */
.tool-bar::before {
  content: "";
  flex: none;
  align-self: stretch;
  width: 3px;
  margin: 5px 4px 5px 5px;
  background: repeating-linear-gradient(#aaa 0 1.5px, transparent 1.5px 4px);
}

.tool {
  flex: none;
  width: 53px;
  height: 40px;
}

.workspace {
  flex: 1;
  min-height: 0;
  display: flex;
  margin-top: 1px;
}

.dock {
  flex: none;
  width: 348px;
  display: flex;
  flex-direction: column;
}

.dock-title {
  flex: none;
  height: 26px;
  display: flex;
  align-items: center;
  padding: 0 9px 0 6px;
  background: #d8d8d8;
  border: 1px solid #bbb;
  letter-spacing: -2px;
}

.dock-title span {
  flex: 1;
}

.dock-float {
  width: 12px;
  height: 12px;
  margin-right: 17px;
}

.dock-close {
  width: 12px;
  height: 12px;
}

.dock-tools {
  flex: none;
  height: 50px;
  display: flex;
  align-items: center;
  padding-left: 8px;
  background: #f0f0f0;
}

.ltool {
  flex: none;
  width: 30px;
  height: 30px;
  margin-right: 12px;
}

.dock-tools .tri {
  --tri: 9px;
  margin: 0 11px 0 -3px;
}

.more {
  margin-left: 14px;
  font-weight: bold;
  font-size: 17px;
  line-height: 1;
}

.tree {
  flex: 1;
  padding-top: 1px;
  background: #fff;
  border: 1px solid #a0a0a0;
  border-bottom: 0;
}

.tree-row {
  position: relative;
  height: 26px;
  margin-left: 28px;
  margin-right: 1px;
  padding-left: 4px;
  display: flex;
  align-items: center;
  overflow: hidden;
  font-size: 16px;
  letter-spacing: -0.35px;
  white-space: nowrap;
}

.tree-row + .tree-row {
  height: 28px;
}

.tree-row.selected {
  background: #cde8ff;
}

.tree-row.selected::after {
  content: "";
  position: absolute;
  left: 29px;
  top: 0;
  right: 0;
  bottom: 0;
  border: 1px dotted #222;
}

.check {
  flex: none;
  position: relative;
  width: 18px;
  height: 18px;
  margin: 0 15px 2px -1px;
  background: #fff;
  border: 1px solid #333;
}

.check::after {
  content: "";
  position: absolute;
  left: 3px;
  top: 3px;
  width: 10px;
  height: 6px;
  border-left: 1.5px solid #333;
  border-bottom: 1.5px solid #333;
  transform: rotate(-45deg);
}

.dot {
  flex: none;
  width: 9px;
  height: 9px;
  margin: 0 14px 2px 0;
  border-radius: 50%;
}

.dot-a {
  background: #a8934f;
}

.dot-b {
  background: #e0603a;
}

.dock-edge {
  flex: none;
  width: 7px;
  background: #f0f0f0;
}

.canvas {
  flex: 1;
  background: #fff;
  border-left: 1px solid #a0a0a0;
}

/* layer context menu */
.ctx {
  position: absolute;
  left: 92px;
  top: 292px;
  width: 309px;
  margin: 0;
  padding: 3px 0 4px;
  list-style: none;
  background: #f0f0f0;
  border: 1px solid #c8c8c8;
  box-shadow: 3px 3px 4px rgba(0, 0, 0, 0.35);
  letter-spacing: -1px;
}

.ctx-item {
  position: relative;
  height: 30px;
  display: flex;
  align-items: center;
  padding: 0 0 2px 45px;
  white-space: nowrap;
}

.ctx-item.off {
  color: #9a9a9a;
}

.ctx-item.hot {
  height: 32px;
  margin-top: -2px;
  padding-bottom: 0;
  background: #90c8f6;
}

.ctx-icon {
  position: absolute;
  left: 6px;
  top: 3px;
  width: 22px;
  height: 22px;
}

.ctx-item.sub::after {
  content: "";
  position: absolute;
  right: 19px;
  top: 9px;
  border-style: solid;
  border-width: 5px 0 5px 6px;
  border-color: transparent transparent transparent #111;
}

.ctx-sep {
  height: 1px;
  margin: 5px 5px 6px 41px;
  background: #d6d6d6;
}

.ctx-sep.tight {
  margin-bottom: 5px;
}

.pin {
  position: absolute;
  width: 11px;
  height: 11px;
  border-radius: 50%;
  border: 1px solid #666;
}

.pin-a {
  left: 424px;
  top: 801px;
  background: #f39c12;
}

.pin-b {
  left: 445px;
  top: 824px;
  background: #e0603a;
}

/* slide annotations */
.mark {
  position: absolute;
  border: 5px solid #f00;
}

.mark-a-nav { left: 0; top: 69px; width: 107px; height: 37px; }
.mark-a-crs { left: 121px; top: 117px; width: 598px; height: 22px; }
.mark-b-nav { left: 1px; top: 566px; width: 129px; height: 42px; }
.mark-b-crs { left: 151px; top: 623px; width: 568px; height: 28px; }
.mark-prop { left: 946px; top: 868px; width: 307px; height: 41px; }

.note {
  position: absolute;
  display: flex;
  flex-direction: column;
  color: #000;
  white-space: nowrap;
}

.note-a { left: 303px; top: 215px; }
.note-b { left: 309px; top: 748px; }

.note-jp {
  margin-left: 2px;
  font-size: 32px;
  line-height: 48px;
  letter-spacing: 1.5px;
}

.note-b .note-jp {
  margin-left: 3px;
  letter-spacing: 1.5px;
}

.note-en {
  margin-top: -2px;
  font-size: 29.5px;
  line-height: 36px;
}

.note-b .note-en {
  margin-top: -1px;
  letter-spacing: -1.3px;
}

.arrows {
  position: absolute;
  left: 0;
  top: 0;
  width: 1313px;
  height: 931px;
  pointer-events: none;
}
```
